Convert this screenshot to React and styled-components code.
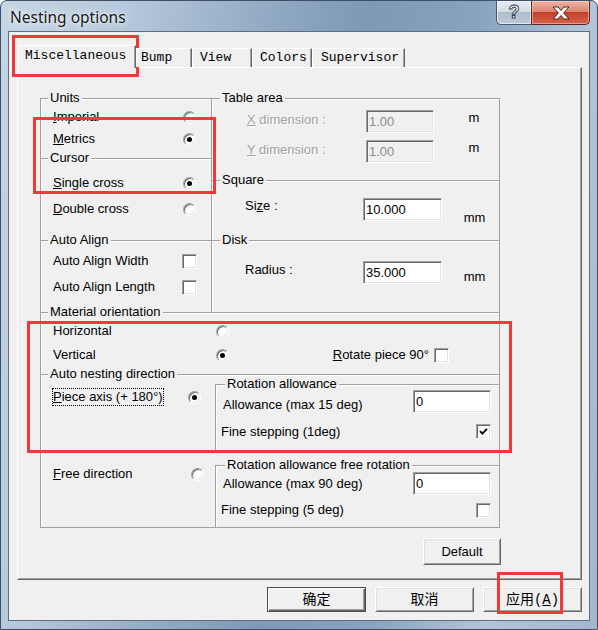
import React from "react";
import styled, { createGlobalStyle } from "styled-components";

const GlobalStyle = createGlobalStyle`
  html, body {
    margin: 0;
    padding: 0;
    background: #fff;
  }
  body {
    font-family: "Liberation Sans", Arial, sans-serif;
    font-size: 13px;
    color: #000;
  }
`;

const sunken = `
  border: 1px solid;
  border-color: #a0a0a0 #fff #fff #a0a0a0;
  box-shadow: inset 1px 1px 0 #696969, inset -1px -1px 0 #e3e3e3;
`;

const Window = styled.div`
  position: relative;
  width: 598px;
  height: 630px;
  box-sizing: border-box;
  display: flex;
  flex-direction: column;
  padding: 0 7px 8px 7px;
  border: 1px solid #3d5066;
  border-radius: 7px 7px 0 0;
  background: linear-gradient(
    100deg,
    #c7d6e5 0%,
    #b6c8db 18%,
    #95adc6 36%,
    #7d99b6 52%,
    #88a3bf 68%,
    #b2c5d9 84%,
    #a0b7ce 100%
  );
  overflow: hidden;
`;

const TitleBar = styled.div`
  height: 30px;
  display: flex;
  align-items: flex-start;
  justify-content: space-between;
`;

const Title = styled.span`
  padding: 6px 0 0 2px;
  font-family: "Noto Sans", "Open Sans", sans-serif;
  font-size: 15.5px;
  line-height: 20px;
  color: #1a1a1a;
  text-shadow: 0 0 8px rgba(255, 255, 255, 0.95), 0 0 3px rgba(255, 255, 255, 0.8);
`;

const CaptionButtons = styled.div`
  display: flex;
`;

const HelpButton = styled.div`
  width: 35px;
  height: 24px;
  box-sizing: border-box;
  border: 1px solid #475a6f;
  border-top: none;
  border-right: none;
  border-radius: 0 0 0 5px;
  background: linear-gradient(#e6ecf2 0%, #d3dce6 46%, #aebdcd 50%, #bccad8 100%);
  box-shadow: inset 0 0 0 1px rgba(255, 255, 255, 0.55);
  display: flex;
  align-items: center;
  justify-content: center;
  font-family: "Liberation Sans", sans-serif;
  font-weight: bold;
  font-size: 18px;
  color: #fff;
  -webkit-text-stroke: 1px #3a4552;
`;

const CloseButton = styled.div`
  width: 59px;
  height: 24px;
  box-sizing: border-box;
  border: 1px solid #5a2a22;
  border-top: none;
  border-radius: 0 0 5px 0;
  background: linear-gradient(#eeb4a6 0%, #dc8671 46%, #c5412a 50%, #d5614a 100%);
  box-shadow: inset 0 0 0 1px rgba(255, 220, 210, 0.5);
  display: flex;
  align-items: center;
  justify-content: center;
`;

const Client = styled.div`
  flex: 1;
  display: flex;
  flex-direction: column;
  border: 1px solid #5b6e83;
  background: #f0f0f0;
  padding: 13px 7px 8px 8px;
`;

const TabStrip = styled.div`
  height: 22px;
  display: flex;
  align-items: flex-end;
  padding-left: 1px;
`;

const Tab = styled.div`
  position: relative;
  z-index: 1;
  box-sizing: border-box;
  width: ${(p) => p.$w}px;
  height: ${(p) => (p.$active ? 23 : 19)}px;
  margin-bottom: ${(p) => (p.$active ? -1 : 0)}px;
  padding-left: ${(p) => p.$pad}px;
  padding-top: ${(p) => (p.$active ? 2 : 1)}px;
  background: #f0f0f0;
  border-top: 1px solid #fff;
  border-left: 1px solid #fff;
  border-right: 1px solid #696969;
  box-shadow: inset -1px 0 0 #a0a0a0;
  font-family: "Liberation Mono", monospace;
  font-size: 13px;
  line-height: 16px;
  white-space: nowrap;
`;

const Panel = styled.div`
  height: 513px;
  box-sizing: border-box;
  display: flex;
  flex-direction: column;
  padding: 30px 0 0 22px;
  border-top: 1px solid #fff;
  border-left: 1px solid #fff;
  border-right: 1px solid #696969;
  border-bottom: 1px solid #696969;
  box-shadow: inset -1px -1px 0 #a0a0a0;
`;

const Sheet = styled.div`
  width: 461px;
  display: flex;
  flex-direction: column;
  align-items: flex-end;
  gap: 10px;
`;

const Frame = styled.div`
  width: 460px;
  height: 430px;
  box-sizing: border-box;
  border-right: 1px solid #a0a0a0;
  border-bottom: 1px solid #a0a0a0;
  align-self: flex-start;
`;

const TopGrid = styled.div`
  display: grid;
  grid-template-columns: 171px 288px;
`;

const Column = styled.div`
  display: flex;
  flex-direction: column;
`;

const Group = styled.div`
  position: relative;
  box-sizing: border-box;
  height: ${(p) => p.$h}px;
  padding-top: ${(p) => p.$pt}px;
  border-top: 1px solid #a0a0a0;
  border-left: 1px solid #a0a0a0;
  border-bottom: ${(p) => (p.$closed ? "1px solid #a0a0a0" : "none")};
  box-shadow: inset 1px 1px 0 #fff;
`;

const Caption = styled.span`
  position: absolute;
  top: -9px;
  left: ${(p) => p.$x}px;
  padding: 0 2px;
  background: #f0f0f0;
  line-height: 16px;
  white-space: nowrap;
`;

const Text = styled.span`
  line-height: 16px;
  white-space: nowrap;
  padding-top: ${(p) => p.$pt || 0}px;
  color: ${(p) => (p.$off ? "#a0a0a0" : "#000")};
  text-shadow: ${(p) => (p.$off ? "1px 1px 0 #fff" : "none")};
`;

const OptionRow = styled.div`
  display: grid;
  grid-template-columns: 1fr 15px;
  align-items: center;
  justify-items: center;
  height: ${(p) => p.$h}px;
  padding: 0 14px 0 12px;
  & > ${Text} {
    justify-self: start;
  }
`;

const FieldRow = styled.div`
  display: grid;
  grid-template-columns: ${(p) => p.$label}px auto auto;
  align-items: start;
  padding-left: ${(p) => p.$indent}px;
  margin-bottom: ${(p) => p.$mb || 0}px;
`;

const Unit = styled.span`
  line-height: 16px;
  margin-left: ${(p) => p.$gap}px;
  margin-top: ${(p) => p.$drop}px;
`;

const Field = styled.div`
  box-sizing: border-box;
  width: ${(p) => p.$w}px;
  height: 23px;
  ${sunken}
  background: ${(p) => (p.$off ? "#f0f0f0" : "#fff")};
  color: ${(p) => (p.$off ? "#8c8c8c" : "#000")};
  padding: 3px 0 0 2px;
  line-height: 16px;
`;

const Radio = styled.span`
  position: relative;
  display: inline-block;
  box-sizing: border-box;
  width: 13px;
  height: 13px;
  border-radius: 50%;
  background: #fff;
  border: 1px solid;
  border-color: #a0a0a0 #fff #fff #a0a0a0;
  box-shadow: inset 1px 1px 0 #696969, inset -1px -1px 0 #e3e3e3;
  margin-right: ${(p) => p.$mr || 0}px;
  &::after {
    content: "";
    display: ${(p) => (p.$on ? "block" : "none")};
    position: absolute;
    left: 3px;
    top: 3px;
    width: 5px;
    height: 5px;
    border-radius: 50%;
    background: #000;
  }
`;

const Box = styled.span`
  display: inline-flex;
  align-items: center;
  justify-content: center;
  box-sizing: border-box;
  width: 15px;
  height: 15px;
  background: #fff;
  ${sunken}
`;

const OrientRow = styled.div`
  display: grid;
  grid-template-columns: 163px 13px 1fr auto 15px;
  align-items: center;
  height: 24px;
  padding: 0 50px 0 12px;
`;

const RotateText = styled.span`
  line-height: 16px;
  margin-right: 5px;
`;

const NestGrid = styled.div`
  display: grid;
  grid-template-columns: 174px 1fr;
  grid-template-rows: 67px 62px;
  row-gap: 14px;
`;

const NestCell = styled.div`
  display: flex;
  align-items: center;
  align-self: start;
  padding: ${(p) => p.$pt}px 0 0 12px;
`;

const FocusLabel = styled.span`
  margin-left: -1px;
  line-height: 16px;
  border: 1px dotted ${(p) => (p.$focus ? "#000" : "transparent")};
  white-space: nowrap;
`;

const Spacer = styled.span`
  flex: 1;
`;

const SubRow = styled.div`
  display: grid;
  grid-template-columns: 1fr 78px;
  align-items: center;
  height: ${(p) => p.$h}px;
  padding: 0 8px 0 ${(p) => p.$indent}px;
  & > ${Box} {
    justify-self: end;
  }
`;

const PushButton = styled.div`
  box-sizing: border-box;
  width: ${(p) => p.$w}px;
  height: ${(p) => p.$h}px;
  display: flex;
  align-items: center;
  justify-content: center;
  background: #f0f0f0;
  border: 1px solid;
  border-color: ${(p) => (p.$def ? "#4a4a4a" : "#fff #696969 #696969 #fff")};
  box-shadow: ${(p) =>
    p.$def
      ? "inset 1px 1px 0 #fff, inset -1px -1px 0 #696969, inset -2px -2px 0 #a0a0a0"
      : "inset 1px 1px 0 #e3e3e3, inset -1px -1px 0 #a0a0a0"};
  font-family: ${(p) =>
    p.$cjk
      ? `"Liberation Mono", "Noto Sans CJK SC", sans-serif`
      : `"Liberation Sans", sans-serif`};
  font-size: ${(p) => (p.$cjk ? 14 : 13)}px;
  line-height: 16px;
`;

const ButtonBar = styled.div`
  display: flex;
  justify-content: flex-end;
  gap: 9px;
  margin-top: 7px;
`;

const Mark = styled.div`
  position: absolute;
  box-sizing: border-box;
  left: ${(p) => p.$x - 1}px;
  top: ${(p) => p.$y - 1}px;
  width: ${(p) => p.$w}px;
  height: ${(p) => p.$h}px;
  border: 3px solid #f03a3a;
  pointer-events: none;
`;

function CheckMark() {
  return (
    <svg width="9" height="9" viewBox="0 0 9 9">
      <path d="M1 4.2 L3.4 6.6 L8 1.8" fill="none" stroke="#000" strokeWidth="1.8" />
    </svg>
  );
}

function CloseGlyph() {
  return (
    <svg width="20" height="14" viewBox="0 0 20 14">
      <path
        d="M2 1 H7 L10 4.5 L13 1 H18 L12.6 7 L18 13 H13 L10 9.5 L7 13 H2 L7.4 7 Z"
        fill="#fff"
        stroke="#4b2420"
        strokeWidth="1"
        strokeLinejoin="round"
      />
    </svg>
  );
}

const tabs = [
  { name: "Miscellaneous", w: 118, pad: 6, active: true },
  { name: "Bump", w: 56, pad: 4 },
  { name: "View", w: 60, pad: 7 },
  { name: "Colors", w: 60, pad: 7 },
  { name: "Supervisor", w: 93, pad: 8 },
];

export default function App() {
  return (
    <Window>
      <GlobalStyle />
      <TitleBar>
        <Title>Nesting options</Title>
        <CaptionButtons>
          <HelpButton>?</HelpButton>
          <CloseButton>
            <CloseGlyph />
          </CloseButton>
        </CaptionButtons>
      </TitleBar>

      <Client>
        <TabStrip>
          {tabs.map((t) => (
            <Tab key={t.name} $w={t.w} $pad={t.pad} $active={t.active}>
              {t.name}
            </Tab>
          ))}
        </TabStrip>

        <Panel>
          <Sheet>
            <Frame>
              <TopGrid>
                <Column>
                  <Group $h={60} $pt={7}>
                    <Caption $x={7}>Units</Caption>
                    <OptionRow $h={22}>
                      <Text><u>I</u>mperial</Text>
                      <Radio />
                    </OptionRow>
                    <OptionRow $h={22}>
                      <Text><u>M</u>etrics</Text>
                      <Radio $on />
                    </OptionRow>
                  </Group>
                  <Group $h={82} $pt={11}>
                    <Caption $x={7}>Cursor</Caption>
                    <OptionRow $h={26}>
                      <Text><u>S</u>ingle cross</Text>
                      <Radio $on />
                    </OptionRow>
                    <OptionRow $h={26}>
                      <Text><u>D</u>ouble cross</Text>
                      <Radio />
                    </OptionRow>
                  </Group>
                  <Group $h={72} $pt={7}>
                    <Caption $x={7}>Auto Align</Caption>
                    <OptionRow $h={26}>
                      <Text>Auto Align Width</Text>
                      <Box />
                    </OptionRow>
                    <OptionRow $h={26}>
                      <Text>Auto Align Length</Text>
                      <Box />
                    </OptionRow>
                  </Group>
                </Column>

                <Column>
                  <Group $h={82} $pt={11}>
                    <Caption $x={8}>Table area</Caption>
                    <FieldRow $label={119} $indent={35} $mb={7}>
                      <Text $off $pt={2}><u>X</u> dimension :</Text>
                      <Field $w={68} $off>1.00</Field>
                      <Unit $gap={15} $drop={0}>m</Unit>
                    </FieldRow>
                    <FieldRow $label={119} $indent={35}>
                      <Text $off $pt={2}><u>Y</u> dimension :</Text>
                      <Field $w={68} $off>1.00</Field>
                      <Unit $gap={15} $drop={0}>m</Unit>
                    </FieldRow>
                  </Group>
                  <Group $h={60} $pt={17}>
                    <Caption $x={8}>Square</Caption>
                    <FieldRow $label={118} $indent={33}>
                      <Text $pt={0}>Si<u>z</u>e :</Text>
                      <Field $w={79}>10.000</Field>
                      <Unit $gap={8} $drop={12}>mm</Unit>
                    </FieldRow>
                  </Group>
                  <Group $h={72} $pt={20}>
                    <Caption $x={8}>Disk</Caption>
                    <FieldRow $label={118} $indent={33}>
                      <Text $pt={1}>Radius :</Text>
                      <Field $w={79}>35.000</Field>
                      <Unit $gap={8} $drop={8}>mm</Unit>
                    </FieldRow>
                  </Group>
                </Column>
              </TopGrid>

              <Group $h={62} $pt={6}>
                <Caption $x={7}>Material orientation</Caption>
                <OrientRow>
                  <Text>Horizontal</Text>
                  <Radio />
                </OrientRow>
                <OrientRow>
                  <Text>Vertical</Text>
                  <Radio $on />
                  <span />
                  <RotateText><u>R</u>otate piece 90°</RotateText>
                  <Box />
                </OrientRow>
              </Group>

              <Group $h={153} $pt={9}>
                <Caption $x={7}>Auto nesting direction</Caption>
                <NestGrid>
                  <NestCell $pt={4}>
                    <FocusLabel $focus><u>P</u>iece axis (+ 180°)</FocusLabel>
                    <Spacer />
                    <Radio $on $mr={14} />
                  </NestCell>
                  <Group $h={67} $pt={5} $closed>
                    <Caption $x={9}>Rotation allowance</Caption>
                    <SubRow $h={23} $indent={7}>
                      <Text $pt={7}>Allowance (max 15 deg)</Text>
                      <Field $w={78}>0</Field>
                    </SubRow>
                    <SubRow $h={37} $indent={5}>
                      <Text>Fine stepping (1deg)</Text>
                      <Box>
                        <CheckMark />
                      </Box>
                    </SubRow>
                  </Group>

                  <NestCell $pt={0}>
                    <FocusLabel><u>F</u>ree direction</FocusLabel>
                    <Spacer />
                    <Radio $mr={11} />
                  </NestCell>
                  <Group $h={62} $pt={6}>
                    <Caption $x={9}>Rotation allowance free rotation</Caption>
                    <SubRow $h={23} $indent={7}>
                      <Text>Allowance (max 90 deg)</Text>
                      <Field $w={78}>0</Field>
                    </SubRow>
                    <SubRow $h={30} $indent={5}>
                      <Text>Fine stepping (5 deg)</Text>
                      <Box />
                    </SubRow>
                  </Group>
                </NestGrid>
              </Group>
            </Frame>

            <PushButton $w={78} $h={27}>Default</PushButton>
          </Sheet>
        </Panel>

        <ButtonBar>
          <PushButton $w={99} $h={25} $cjk $def>确定</PushButton>
          <PushButton $w={99} $h={25} $cjk>取消</PushButton>
          <PushButton $w={99} $h={25} $cjk>
            应用(<u>A</u>)
          </PushButton>
        </ButtonBar>
      </Client>

      <Mark $x={12} $y={35} $w={127} $h={42} />
      <Mark $x={33} $y={117} $w={183} $h={77} />
      <Mark $x={27} $y={321} $w={485} $h={132} />
      <Mark $x={497} $y={572} $w={66} $h={42} />
    </Window>
  );
}
